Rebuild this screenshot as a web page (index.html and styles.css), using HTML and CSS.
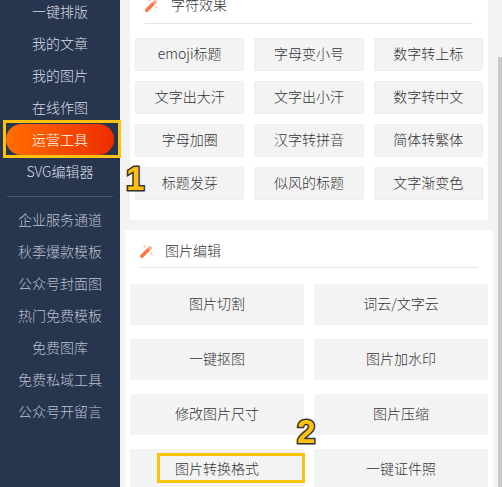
FILE: index.html
```html
<!DOCTYPE html>
<html lang="zh-CN">
  <head>
    <meta charset="UTF-8" />
    <meta name="viewport" content="width=device-width, initial-scale=1.0" />
    <title>运营工具</title>
    <link rel="stylesheet" href="styles.css">
  </head>
  <body>
    <div class="page">
      <aside class="sidebar">
        <ul class="nav-list">
          <li class="nav-item">一键排版</li>
          <li class="nav-item">我的文章</li>
          <li class="nav-item">我的图片</li>
          <li class="nav-item">在线作图</li>
          <li class="nav-item active"><span class="nav-pill">运营工具</span></li>
          <li class="nav-item">SVG编辑器</li>
        </ul>
        <ul class="nav-list nav-list-more">
          <li class="nav-item">企业服务通道</li>
          <li class="nav-item">秋季爆款模板</li>
          <li class="nav-item">公众号封面图</li>
          <li class="nav-item">热门免费模板</li>
          <li class="nav-item">免费图库</li>
          <li class="nav-item">免费私域工具</li>
          <li class="nav-item">公众号开留言</li>
        </ul>
      </aside>

      <main class="main">
        <section class="card card-text">
          <div class="section-head">
            <svg class="wand" viewBox="0 0 13 13" width="13" height="13">
              <path d="M1.8 11.2L8.2 4.8" stroke="#ff7440" stroke-width="3.4" stroke-linecap="round" />
              <path d="M8.6 4.4L11 2" stroke="#ffa585" stroke-width="3.4" />
              <path d="M3 1.5h3M4.5 0v3M10 8.5h3M11.5 7v3" stroke="#ffd0c0" stroke-width="1" />
            </svg>
            <h2>字符效果</h2>
          </div>
          <div class="btn-grid">
            <div class="tool-btn">emoji标题</div>
            <div class="tool-btn">字母变小号</div>
            <div class="tool-btn">数字转上标</div>
            <div class="tool-btn">文字出大汗</div>
            <div class="tool-btn">文字出小汗</div>
            <div class="tool-btn">数字转中文</div>
            <div class="tool-btn">字母加圈</div>
            <div class="tool-btn">汉字转拼音</div>
            <div class="tool-btn">简体转繁体</div>
            <div class="tool-btn">标题发芽</div>
            <div class="tool-btn">似风的标题</div>
            <div class="tool-btn">文字渐变色</div>
          </div>
        </section>

        <section class="card card-image">
          <div class="section-head">
            <svg class="wand" viewBox="0 0 13 13" width="13" height="13">
              <path d="M1.8 11.2L8.2 4.8" stroke="#ff7440" stroke-width="3.4" stroke-linecap="round" />
              <path d="M8.6 4.4L11 2" stroke="#ffa585" stroke-width="3.4" />
              <path d="M3 1.5h3M4.5 0v3M10 8.5h3M11.5 7v3" stroke="#ffd0c0" stroke-width="1" />
            </svg>
            <h2>图片编辑</h2>
          </div>
          <div class="btn-grid">
            <div class="tool-btn">图片切割</div>
            <div class="tool-btn">词云/文字云</div>
            <div class="tool-btn">一键抠图</div>
            <div class="tool-btn">图片加水印</div>
            <div class="tool-btn">修改图片尺寸</div>
            <div class="tool-btn">图片压缩</div>
            <div class="tool-btn marked">图片转换格式</div>
            <div class="tool-btn">一键证件照</div>
          </div>
        </section>
      </main>

      <div class="scrollbar"><div class="scrollbar-thumb"></div></div>

      <span class="step step-one">1</span>
      <span class="step step-two">2</span>
    </div>
  </body>
</html>
```

FILE: styles.css
```css
*,
*::after {
  box-sizing: border-box;
}

body {
  margin: 0;
  font-family: "Noto Sans CJK SC", "Liberation Sans", sans-serif;
  font-size: 14px;
  font-weight: 300;
  color: #333;
}

.page {
  position: relative;
  display: flex;
  height: 487px;
  overflow: hidden;
  background-color: #f3f3f3;
}

.sidebar {
  flex: 0 0 120px;
  background-color: #28354f;
}

.nav-list {
  margin: -4px 0 0;
  padding: 0;
  list-style: none;
}

.nav-list-more {
  margin: 8px 7px 0;
  padding-top: 7px;
  border-top: 1px solid #4a566e;
}

.nav-item {
  height: 32px;
  line-height: 30px;
  text-align: center;
  color: #d8dde5;
  white-space: nowrap;
}

.nav-list-more .nav-item {
  color: #bcc3cf;
}

.nav-item.active {
  position: relative;
  padding: 0 6px;
}

.nav-item.active::after {
  content: "";
  position: absolute;
  top: -4px;
  left: 3px;
  width: 118px;
  height: 38px;
  border: 3px solid #fdc20d;
}

.nav-pill {
  display: block;
  height: 31px;
  line-height: 30px;
  border-radius: 16px;
  color: #fff;
  background: linear-gradient(90deg, #ff6f00, #ee2c00);
}

.main {
  flex: 0 0 378px;
}

.card {
  background-color: #fff;
}

.card-text {
  margin: -5px 10px 0;
  padding-bottom: 20px;
}

.card-image {
  margin: 10px 5px 0;
  padding-top: 11px;
}

.section-head {
  display: flex;
  align-items: center;
  margin: 0 15px;
  border-bottom: 1px solid #e6e6e6;
}

.card-text .section-head {
  gap: 13px;
  padding-bottom: 8px;
}

.card-image .section-head {
  gap: 12px;
  padding-bottom: 6px;
}

.section-head h2 {
  margin: 0;
  font-size: 14px;
  font-weight: 300;
  line-height: 18px;
  height: 20px;
}

.wand {
  flex: none;
}

.btn-grid {
  display: grid;
  padding: 0 5px;
}

.card-text .btn-grid {
  grid-template-columns: repeat(3, 1fr);
  gap: 10px;
  margin-top: 14px;
}

.card-image .btn-grid {
  grid-template-columns: repeat(2, 1fr);
  gap: 14px 10px;
  margin-top: 16px;
}

.tool-btn {
  position: relative;
  text-align: center;
  background-color: #f3f3f3;
  border-radius: 2px;
}

.card-text .tool-btn {
  height: 33px;
  line-height: 29px;
  border: 1px solid #eee;
}

.card-image .tool-btn {
  height: 41px;
  line-height: 39px;
}

.tool-btn.marked::after {
  content: "";
  position: absolute;
  top: 4px;
  left: 27px;
  width: 148px;
  height: 30px;
  border: 3px solid #fdc20d;
}

.scrollbar {
  flex: 0 0 4px;
  padding-top: 57px;
  background-color: #f1f1f1;
}

.scrollbar-thumb {
  height: 100%;
  background-color: #c8c8c8;
}

.step {
  position: absolute;
  font-family: "Liberation Sans", sans-serif;
  font-size: 33px;
  font-weight: bold;
  line-height: 33px;
  color: #fdc20d;
  -webkit-text-stroke: 3px #333;
  paint-order: stroke fill;
}

.step-one {
  top: 162px;
  left: 126px;
}

.step-two {
  top: 415px;
  left: 297px;
}
```
